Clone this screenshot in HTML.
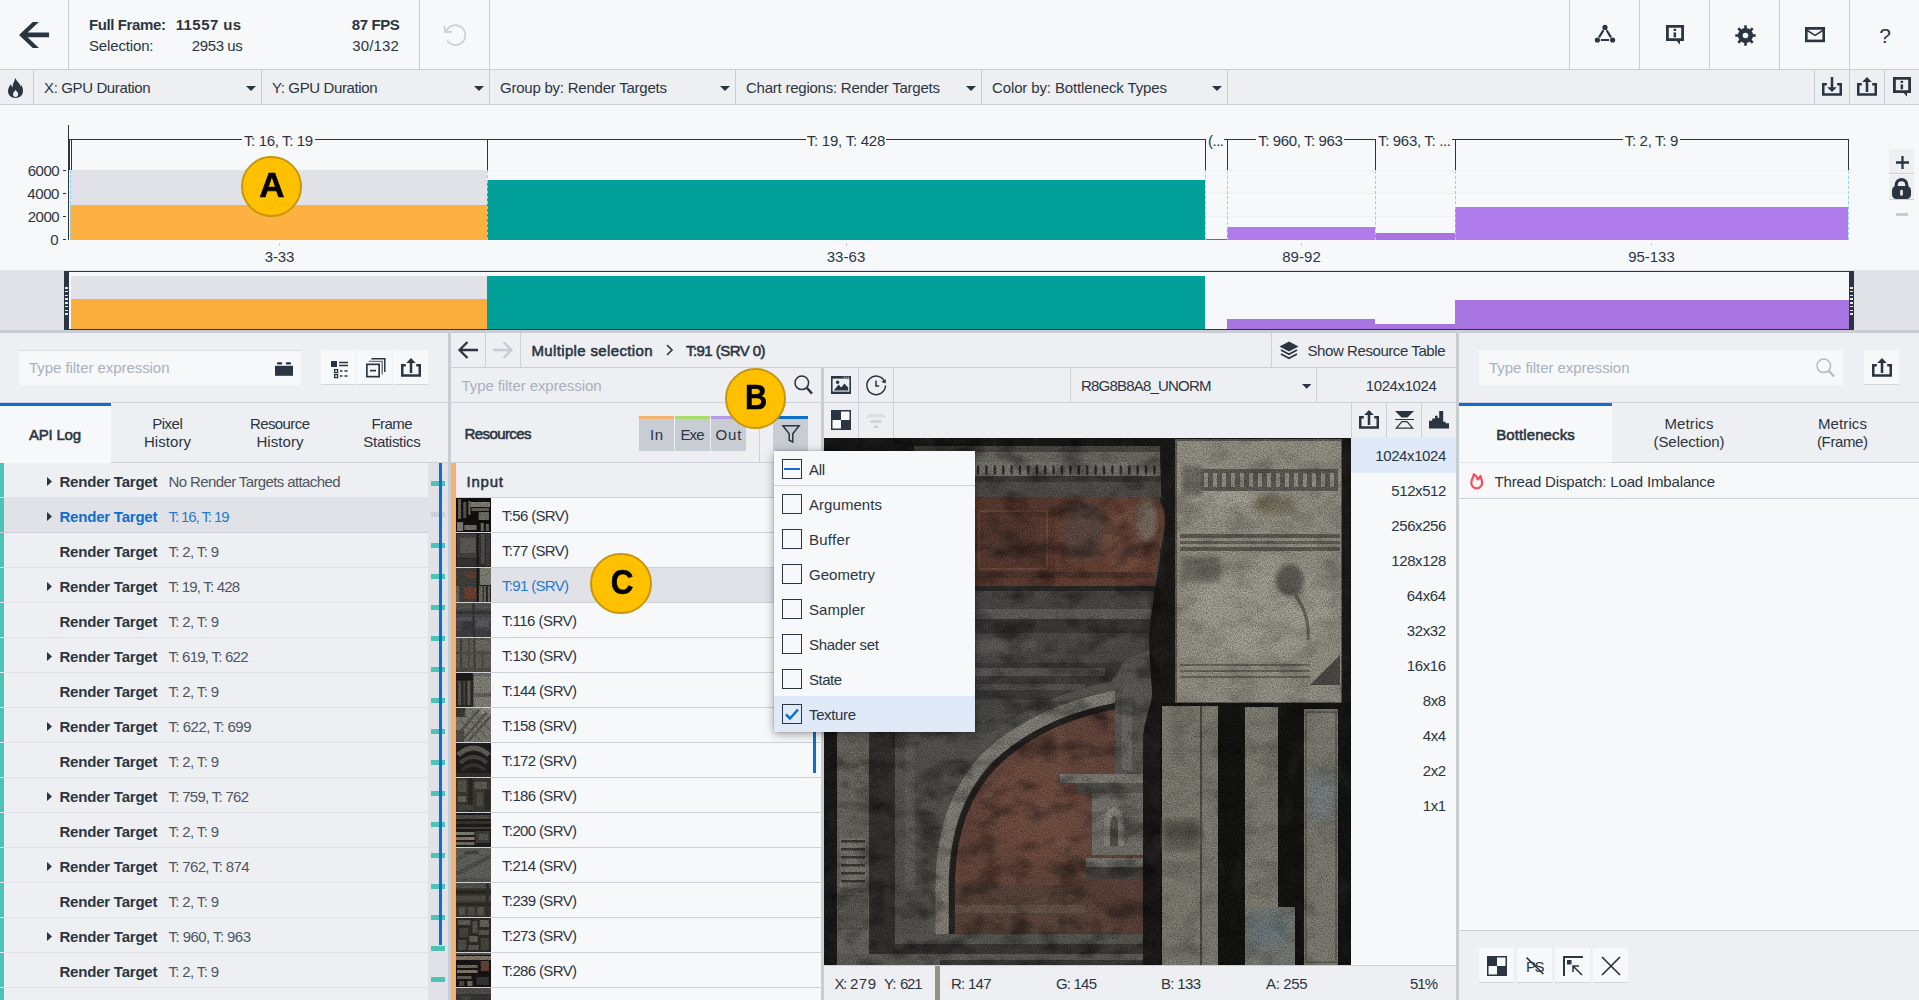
<!DOCTYPE html>
<html lang="en"><head><meta charset="utf-8"><title>Graphics Frame Analyzer</title>
<style>
*{box-sizing:border-box;margin:0;padding:0}
html,body{width:1919px;height:1000px;overflow:hidden;background:#f7f8fa}
body{position:relative;font-family:"Liberation Sans",sans-serif;font-size:15px;color:#2b3541}
.a{position:absolute;display:block}
.t{position:absolute;display:block;white-space:pre;line-height:20px;height:20px}
svg{overflow:visible}
</style></head>
<body>
<!-- top bar -->
<div class="a" style="left:0px;top:0px;width:1919px;height:69px;background:#f7f8fa;"></div>
<div class="a" style="left:0px;top:69px;width:1919px;height:1px;background:#cacdd4;"></div>
<div class="a" style="left:68px;top:0px;width:1px;height:69px;background:#cacdd4;"></div>
<div class="a" style="left:419px;top:0px;width:1px;height:69px;background:#cacdd4;"></div>
<div class="a" style="left:489px;top:0px;width:1px;height:69px;background:#cacdd4;"></div>
<div class="a" style="left:1569px;top:0px;width:1px;height:69px;background:#cacdd4;"></div>
<div class="a" style="left:1639px;top:0px;width:1px;height:69px;background:#cacdd4;"></div>
<div class="a" style="left:1709px;top:0px;width:1px;height:69px;background:#cacdd4;"></div>
<div class="a" style="left:1779px;top:0px;width:1px;height:69px;background:#cacdd4;"></div>
<div class="a" style="left:1849px;top:0px;width:1px;height:69px;background:#cacdd4;"></div>
<svg class="a" style="left:19px;top:22px;" width="30" height="26" viewBox="0 0 30 26"><path d="M0 12.9 L13.75 0 H20 L8.6 10.6 H30 V15.3 H8.6 L20 25.9 H13.75 Z" fill="#2b3541"/></svg>
<span class="t" style="top:15px;font-size:15px;font-weight:700;letter-spacing:-0.396px;left:89px;">Full Frame:</span>
<span class="t" style="top:15px;font-size:15px;font-weight:700;letter-spacing:0.420px;right:1677px;margin-right:0.420px;">11557 us</span>
<span class="t" style="top:15px;font-size:15px;font-weight:700;letter-spacing:-0.406px;right:1520px;margin-right:-0.406px;">87 FPS</span>
<span class="t" style="top:35.6px;font-size:15px;letter-spacing:-0.153px;left:89px;">Selection:</span>
<span class="t" style="top:35.6px;font-size:15px;letter-spacing:-0.398px;right:1677px;margin-right:-0.398px;">2953 us</span>
<span class="t" style="top:35.6px;font-size:15px;letter-spacing:0.122px;right:1520px;margin-right:0.122px;">30/132</span>
<svg class="a" style="left:443px;top:23.2px;" width="23" height="22" viewBox="0 0 23 22"><path d="M3.3 8.4 A9.9 9.9 0 1 1 4.2 17.6" fill="none" stroke="#cbced4" stroke-width="1.7"/><path d="M1.2 2.6 L2.4 9.4 L9.2 8.6" fill="none" stroke="#cbced4" stroke-width="1.7"/></svg>
<svg class="a" style="left:1594px;top:24px;" width="22" height="20" viewBox="0 0 22 20"><g fill="none" stroke="#2b3541" stroke-width="2.2"><path d="M9.4 6.2 L5 13.4 M12.6 6.2 L17 13.4 M6.9 16 H15.1"/></g><g fill="#2b3541"><circle cx="11" cy="3.4" r="2.6"/><circle cx="3.4" cy="16" r="2.6"/><circle cx="18.6" cy="16" r="2.6"/></g></svg>
<svg class="a" style="left:1666px;top:25px;" width="18" height="20" viewBox="0 0 18 20"><path d="M1.4 1.4 H16.6 V14.6 H1.4 Z" fill="none" stroke="#2b3541" stroke-width="2.8"/><path d="M10.4 15.5 H14 V19.8 Z" fill="#2b3541"/><rect x="7.6" y="3.8" width="2.5" height="2.2" fill="#2b3541"/><rect x="7.6" y="7.4" width="2.5" height="4.9" fill="#2b3541"/></svg>
<svg class="a" style="left:1734.5px;top:24.5px;" width="21" height="21" viewBox="0 0 21 21"><g transform="translate(10.5,10.5)" fill="#2b3541"><rect x="-1.3" y="-10.2" width="2.6" height="5" transform="rotate(0)"/><rect x="-1.3" y="-10.2" width="2.6" height="5" transform="rotate(45)"/><rect x="-1.3" y="-10.2" width="2.6" height="5" transform="rotate(90)"/><rect x="-1.3" y="-10.2" width="2.6" height="5" transform="rotate(135)"/><rect x="-1.3" y="-10.2" width="2.6" height="5" transform="rotate(180)"/><rect x="-1.3" y="-10.2" width="2.6" height="5" transform="rotate(225)"/><rect x="-1.3" y="-10.2" width="2.6" height="5" transform="rotate(270)"/><rect x="-1.3" y="-10.2" width="2.6" height="5" transform="rotate(315)"/><circle r="7.6"/><circle r="2.8" fill="#f7f8fa"/></g></svg>
<svg class="a" style="left:1805px;top:27px;" width="20" height="15.4" viewBox="0 0 20 15.4"><rect x="1.3" y="1.3" width="17.4" height="12.6" fill="none" stroke="#2b3541" stroke-width="2.6"/><path d="M1.5 3 L10 8.4 L18.5 3" fill="none" stroke="#2b3541" stroke-width="1.5"/><rect x="0" y="0" width="20" height="2.4" fill="#2b3541"/></svg>
<span class="t" style="top:25.5px;font-size:21px;left:1685px;width:400px;text-align:center;">?</span>
<!-- toolbar -->
<div class="a" style="left:0px;top:70px;width:1919px;height:34px;background:#eeeff3;"></div>
<div class="a" style="left:0px;top:104px;width:1919px;height:1px;background:#cacdd4;"></div>
<div class="a" style="left:33px;top:70px;width:1px;height:34px;background:#cacdd4;"></div>
<div class="a" style="left:261px;top:70px;width:1px;height:34px;background:#cacdd4;"></div>
<div class="a" style="left:489px;top:70px;width:1px;height:34px;background:#cacdd4;"></div>
<div class="a" style="left:735px;top:70px;width:1px;height:34px;background:#cacdd4;"></div>
<div class="a" style="left:981px;top:70px;width:1px;height:34px;background:#cacdd4;"></div>
<div class="a" style="left:1227px;top:70px;width:1px;height:34px;background:#cacdd4;"></div>
<div class="a" style="left:1814px;top:70px;width:1px;height:34px;background:#cacdd4;"></div>
<div class="a" style="left:1849px;top:70px;width:1px;height:34px;background:#cacdd4;"></div>
<div class="a" style="left:1884px;top:70px;width:1px;height:34px;background:#cacdd4;"></div>
<svg class="a" style="left:8px;top:78px;" width="15" height="20" viewBox="0 0 15 20"><path d="M7.2 0 C8.5 3 12 5.5 13 9 C13.2 8 13 7 12.6 6.2 C14.6 8.5 15 11 15 13 C15 17 12 20 7.5 20 C3 20 0 17 0 13 C0 10 1.6 8 3 6 C3.2 7.5 3.6 8.6 4.4 9.4 C4.6 6 6.4 3.5 7.2 0 Z M7.5 19 C9 19 10.2 17.8 10.2 16.2 C10.2 14.6 8.6 13.6 7.6 12 C6.6 13.6 5 14.6 5 16.2 C5 17.8 6 19 7.5 19 Z" fill="#2b3541" fill-rule="evenodd"/></svg>
<span class="t" style="top:77.5px;font-size:15px;letter-spacing:-0.373px;left:44px;">X: GPU Duration</span>
<span class="t" style="top:77.5px;font-size:15px;letter-spacing:-0.385px;left:272px;">Y: GPU Duration</span>
<span class="t" style="top:77.5px;font-size:15px;letter-spacing:-0.232px;left:500px;">Group by: Render Targets</span>
<span class="t" style="top:77.5px;font-size:15px;letter-spacing:-0.238px;left:746px;">Chart regions: Render Targets</span>
<span class="t" style="top:77.5px;font-size:15px;letter-spacing:-0.126px;left:992px;">Color by: Bottleneck Types</span>
<svg class="a" style="left:246px;top:86px;" width="10" height="5" viewBox="0 0 10 5"><path d="M0 0 H10 L5 5 Z" fill="#2b3541"/></svg>
<svg class="a" style="left:474px;top:86px;" width="10" height="5" viewBox="0 0 10 5"><path d="M0 0 H10 L5 5 Z" fill="#2b3541"/></svg>
<svg class="a" style="left:720px;top:86px;" width="10" height="5" viewBox="0 0 10 5"><path d="M0 0 H10 L5 5 Z" fill="#2b3541"/></svg>
<svg class="a" style="left:966px;top:86px;" width="10" height="5" viewBox="0 0 10 5"><path d="M0 0 H10 L5 5 Z" fill="#2b3541"/></svg>
<svg class="a" style="left:1212px;top:86px;" width="10" height="5" viewBox="0 0 10 5"><path d="M0 0 H10 L5 5 Z" fill="#2b3541"/></svg>
<svg class="a" style="left:1822px;top:77px;" width="20" height="19" viewBox="0 0 20 19"><path d="M4.8 7.25 H1.25 V17.5 H18.75 V7.25 H15.2" fill="none" stroke="#2b3541" stroke-width="2.5"/><rect x="8.75" y="0" width="2.5" height="11" fill="#2b3541"/><path d="M10 15 L5.2 10.2 H14.8 Z" fill="#2b3541"/></svg>
<svg class="a" style="left:1857px;top:77px;" width="20" height="19" viewBox="0 0 20 19"><path d="M4.8 7.25 H1.25 V17.5 H18.75 V7.25 H15.2" fill="none" stroke="#2b3541" stroke-width="2.5"/><rect x="8.75" y="4" width="2.5" height="11" fill="#2b3541"/><path d="M10 0 L5.2 4.9 H14.8 Z" fill="#2b3541"/></svg>
<svg class="a" style="left:1893px;top:77px;" width="18" height="20" viewBox="0 0 18 20"><path d="M1.4 1.4 H16.6 V14.6 H1.4 Z" fill="none" stroke="#2b3541" stroke-width="2.8"/><path d="M10.4 15.5 H14 V19.8 Z" fill="#2b3541"/><rect x="7.6" y="3.8" width="2.5" height="2.2" fill="#2b3541"/><rect x="7.6" y="7.4" width="2.5" height="4.9" fill="#2b3541"/></svg>
<!-- chart -->
<div class="a" style="left:70px;top:170px;width:1779px;height:1px;background:#eff0f3;"></div>
<div class="a" style="left:70px;top:193px;width:1779px;height:1px;background:#eff0f3;"></div>
<div class="a" style="left:70px;top:216px;width:1779px;height:1px;background:#eff0f3;"></div>
<div class="a" style="left:70px;top:170px;width:417px;height:35px;background:#e1e2e7;"></div>
<div class="a" style="left:70px;top:205px;width:417px;height:35px;background:#fcb142;"></div>
<div class="a" style="left:487px;top:180px;width:718px;height:60px;background:#009f98;"></div>
<div class="a" style="left:1205px;top:239px;width:22px;height:1px;background:#009f98;"></div>
<div class="a" style="left:1227px;top:227px;width:148px;height:13px;background:#b07cec;"></div>
<div class="a" style="left:1375px;top:233px;width:80px;height:7px;background:#a873e0;"></div>
<div class="a" style="left:1455px;top:207px;width:393px;height:33px;background:#b07cec;"></div>
<div class="a" style="left:70px;top:170px;width:0;height:70px;border-left:1px dashed #86d6f2"></div>
<div class="a" style="left:487px;top:170px;width:0;height:70px;border-left:1px dashed #86d6f2"></div>
<div class="a" style="left:1205px;top:170px;width:0;height:70px;border-left:1px dashed #86d6f2"></div>
<div class="a" style="left:1227px;top:140px;width:0;height:100px;border-left:1px dashed #86d6f2"></div>
<div class="a" style="left:1375px;top:140px;width:0;height:100px;border-left:1px dashed #86d6f2"></div>
<div class="a" style="left:1455px;top:140px;width:0;height:100px;border-left:1px dashed #86d6f2"></div>
<div class="a" style="left:1848px;top:140px;width:0;height:100px;border-left:1px dashed #86d6f2"></div>
<div class="a" style="left:68px;top:125px;width:1px;height:115px;background:#2b3541;"></div>
<div class="a" style="left:69px;top:139px;width:1780px;height:1px;background:#2b3541;"></div>
<div class="a" style="left:69px;top:139px;width:1px;height:31px;background:#2b3541;"></div>
<div class="a" style="left:71px;top:139px;width:1px;height:31px;background:#2b3541;"></div>
<div class="a" style="left:487px;top:139px;width:1px;height:31px;background:#2b3541;"></div>
<div class="a" style="left:1205px;top:139px;width:1px;height:31px;background:#2b3541;"></div>
<div class="a" style="left:1227px;top:139px;width:1px;height:31px;background:#2b3541;"></div>
<div class="a" style="left:1375px;top:139px;width:1px;height:31px;background:#2b3541;"></div>
<div class="a" style="left:1455px;top:139px;width:1px;height:31px;background:#2b3541;"></div>
<div class="a" style="left:1848px;top:139px;width:1px;height:31px;background:#2b3541;"></div>
<div class="a" style="left:242px;top:130px;width:73px;height:20px;background:#f7f8fa;"></div>
<span class="t" style="top:130.5px;font-size:15px;letter-spacing:-0.355px;left:78.5px;width:400px;text-align:center;margin-left:-0.178px;">T: 16, T: 19</span>
<div class="a" style="left:806px;top:130px;width:80px;height:20px;background:#f7f8fa;"></div>
<span class="t" style="top:130.5px;font-size:15px;letter-spacing:-0.246px;left:646px;width:400px;text-align:center;margin-left:-0.123px;">T: 19, T: 428</span>
<div class="a" style="left:1206px;top:130px;width:18px;height:20px;background:#f7f8fa;"></div>
<span class="t" style="top:130.5px;font-size:15px;letter-spacing:-0.500px;left:1016px;width:400px;text-align:center;margin-left:-0.250px;">(...</span>
<div class="a" style="left:1256px;top:130px;width:88px;height:20px;background:#f7f8fa;"></div>
<span class="t" style="top:130.5px;font-size:15px;letter-spacing:-0.407px;left:1100.5px;width:400px;text-align:center;margin-left:-0.204px;">T: 960, T: 963</span>
<div class="a" style="left:1376px;top:130px;width:76px;height:20px;background:#f7f8fa;"></div>
<span class="t" style="top:130.5px;font-size:15px;letter-spacing:-0.328px;left:1214.5px;width:400px;text-align:center;margin-left:-0.164px;">T: 963, T: ...</span>
<div class="a" style="left:1623px;top:130px;width:57px;height:20px;background:#f7f8fa;"></div>
<span class="t" style="top:130.5px;font-size:15px;letter-spacing:-0.325px;left:1451.5px;width:400px;text-align:center;margin-left:-0.162px;">T: 2, T: 9</span>
<span class="t" style="top:160.6px;font-size:15px;letter-spacing:-0.492px;right:1860.4px;margin-right:-0.492px;">6000</span>
<div class="a" style="left:63px;top:170px;width:3px;height:1px;background:#2b3541;"></div>
<span class="t" style="top:183.7px;font-size:15px;letter-spacing:-0.425px;right:1860.4px;margin-right:-0.425px;">4000</span>
<div class="a" style="left:63px;top:193px;width:3px;height:1px;background:#2b3541;"></div>
<span class="t" style="top:206.5px;font-size:15px;letter-spacing:-0.492px;right:1860.4px;margin-right:-0.492px;">2000</span>
<div class="a" style="left:63px;top:216px;width:3px;height:1px;background:#2b3541;"></div>
<span class="t" style="top:229.5px;font-size:15px;right:1860.4px;">0</span>
<div class="a" style="left:63px;top:239px;width:3px;height:1px;background:#2b3541;"></div>
<span class="t" style="top:247px;font-size:15px;letter-spacing:-0.177px;left:79.5px;width:400px;text-align:center;margin-left:-0.089px;">3-33</span>
<div class="a" style="left:279px;top:243px;width:1px;height:3px;background:#c9ccd2;"></div>
<span class="t" style="top:247px;font-size:15px;letter-spacing:0.031px;left:646px;width:400px;text-align:center;margin-left:0.016px;">33-63</span>
<div class="a" style="left:846px;top:243px;width:1px;height:3px;background:#c9ccd2;"></div>
<span class="t" style="top:247px;font-size:15px;letter-spacing:0.031px;left:1101.5px;width:400px;text-align:center;margin-left:0.016px;">89-92</span>
<div class="a" style="left:1301px;top:243px;width:1px;height:3px;background:#c9ccd2;"></div>
<span class="t" style="top:247px;font-size:15px;letter-spacing:-0.044px;left:1451.5px;width:400px;text-align:center;margin-left:-0.022px;">95-133</span>
<div class="a" style="left:1651px;top:243px;width:1px;height:3px;background:#c9ccd2;"></div>
<div class="a" style="left:1889px;top:149px;width:25px;height:25px;background:#eeeff3;border-bottom:1px solid #cdd0d6;"></div>
<div class="a" style="left:1889px;top:175px;width:25px;height:25px;background:#eeeff3;border-bottom:1px solid #cdd0d6;"></div>
<svg class="a" style="left:1895.5px;top:155.5px;" width="13" height="13" viewBox="0 0 13 13"><path d="M6.5 0 V13 M0 6.5 H13" stroke="#2b3541" stroke-width="2.3"/></svg>
<svg class="a" style="left:1892px;top:176.5px;" width="19" height="22" viewBox="0 0 19 22"><path d="M4.2 12 V8 A5.3 5.3 0 0 1 14.8 8 V12" fill="none" stroke="#2b3541" stroke-width="3.2"/><rect x="0" y="9" width="19" height="13" rx="4.5" fill="#2b3541"/><rect x="8.2" y="12.8" width="2.6" height="6" rx="1.3" fill="#eeeff3"/></svg>
<div class="a" style="left:1896px;top:213px;width:12px;height:2.5px;background:#c9ccd2;"></div>
<!-- overview -->
<div class="a" style="left:0px;top:270px;width:1919px;height:60px;background:#e1e2e7;"></div>
<div class="a" style="left:69px;top:272px;width:1780px;height:57px;background:#f7f8fa;"></div>
<div class="a" style="left:64px;top:271px;width:1790px;height:1px;background:#2b3541;"></div>
<div class="a" style="left:64px;top:329px;width:1790px;height:1px;background:#2b3541;"></div>
<div class="a" style="left:64px;top:271px;width:5px;height:59px;background:#2b3541;"></div>
<div class="a" style="left:1849px;top:271px;width:5px;height:59px;background:#2b3541;"></div>
<div class="a" style="left:0px;top:330px;width:1919px;height:3px;background:#c8ccd3;"></div>
<div class="a" style="left:71px;top:276px;width:416px;height:23px;background:#e1e2e7;"></div>
<div class="a" style="left:71px;top:299px;width:416px;height:30px;background:#f9ae3e;"></div>
<div class="a" style="left:487px;top:276px;width:718px;height:53px;background:#009f98;"></div>
<div class="a" style="left:1227px;top:319px;width:148px;height:10px;background:#a874e2;"></div>
<div class="a" style="left:1375px;top:324px;width:80px;height:5px;background:#a874e2;"></div>
<div class="a" style="left:1455px;top:300px;width:394px;height:29px;background:#a874e2;"></div>
<div class="a" style="left:65px;top:287.0px;width:3px;height:1.5px;background:#e4e5e9;"></div>
<div class="a" style="left:65px;top:290.75px;width:3px;height:1.5px;background:#e4e5e9;"></div>
<div class="a" style="left:65px;top:294.5px;width:3px;height:1.5px;background:#e4e5e9;"></div>
<div class="a" style="left:65px;top:298.25px;width:3px;height:1.5px;background:#e4e5e9;"></div>
<div class="a" style="left:65px;top:302.0px;width:3px;height:1.5px;background:#e4e5e9;"></div>
<div class="a" style="left:65px;top:305.75px;width:3px;height:1.5px;background:#e4e5e9;"></div>
<div class="a" style="left:65px;top:309.5px;width:3px;height:1.5px;background:#e4e5e9;"></div>
<div class="a" style="left:65px;top:313.25px;width:3px;height:1.5px;background:#e4e5e9;"></div>
<div class="a" style="left:1850px;top:287.0px;width:3px;height:1.5px;background:#e4e5e9;"></div>
<div class="a" style="left:1850px;top:290.75px;width:3px;height:1.5px;background:#e4e5e9;"></div>
<div class="a" style="left:1850px;top:294.5px;width:3px;height:1.5px;background:#e4e5e9;"></div>
<div class="a" style="left:1850px;top:298.25px;width:3px;height:1.5px;background:#e4e5e9;"></div>
<div class="a" style="left:1850px;top:302.0px;width:3px;height:1.5px;background:#e4e5e9;"></div>
<div class="a" style="left:1850px;top:305.75px;width:3px;height:1.5px;background:#e4e5e9;"></div>
<div class="a" style="left:1850px;top:309.5px;width:3px;height:1.5px;background:#e4e5e9;"></div>
<div class="a" style="left:1850px;top:313.25px;width:3px;height:1.5px;background:#e4e5e9;"></div>
<div class="a" style="left:240.8px;top:155.8px;width:61.4px;height:61.4px;border-radius:50%;background:#ffc000;border:2px solid #c7960d"></div>
<span class="t" style="top:174.9px;font-size:35.7px;font-weight:700;color:#000;left:71.69999999999999px;width:400px;text-align:center;transform:scaleX(0.98);-webkit-text-stroke:0.6px #000;">A</span>
<!-- left panel -->
<div class="a" style="left:0px;top:333px;width:448px;height:667px;background:#eeeff3;"></div>
<div class="a" style="left:19px;top:350px;width:282px;height:35px;background:#f7f8fa;border-top:1px solid #dcdee3;"></div>
<span class="t" style="top:358px;font-size:15px;color:#a9b1bd;letter-spacing:-0.059px;left:29px;">Type filter expression</span>
<svg class="a" style="left:275px;top:361.6px;" width="18" height="14" viewBox="0 0 18 14"><rect x="0" y="3.8" width="18" height="10" fill="#2b3541"/><rect x="2" y="0.2" width="5.2" height="2.4" rx="1" fill="#2b3541"/><rect x="10.8" y="0.2" width="5.2" height="2.4" rx="1" fill="#2b3541"/></svg>
<div class="a" style="left:321px;top:350px;width:35px;height:35px;background:#f7f8fa;border-bottom:1px solid #d2d5da;"></div>
<div class="a" style="left:357px;top:350px;width:35px;height:35px;background:#f7f8fa;border-bottom:1px solid #d2d5da;"></div>
<div class="a" style="left:393px;top:350px;width:35px;height:35px;background:#f7f8fa;border-bottom:1px solid #d2d5da;"></div>
<svg class="a" style="left:331.4px;top:360.6px;" width="17" height="17" viewBox="0 0 17 17"><rect x="0" y="0" width="6" height="6" fill="#2b3541"/><path d="M8 1.5 H17 M8 4.5 H17" stroke="#2b3541" stroke-width="1.3"/><g fill="none" stroke="#2b3541" stroke-width="1.3"><rect x="3.6" y="8.6" width="3" height="3"/><rect x="3.6" y="13.6" width="3" height="3"/></g><path d="M9 10 H11.5 M13.5 10 H16.5 M9 15 H11.5 M13.5 15 H16.5" stroke="#2b3541" stroke-width="1.5"/></svg>
<svg class="a" style="left:366px;top:357.5px;" width="20" height="20" viewBox="0 0 20 20"><g fill="none"><path d="M5.3 0.8 H18.8 V14" stroke="#2b3541" stroke-width="1.5"/><path d="M2.8 3.4 H16.2 V16.5" stroke="#6b737d" stroke-width="1.4"/><rect x="0.85" y="6.35" width="12.3" height="12.3" stroke="#2b3541" stroke-width="1.7"/><path d="M4 12.6 H10" stroke="#2b3541" stroke-width="1.7"/></g></svg>
<svg class="a" style="left:401px;top:358px;" width="20" height="19" viewBox="0 0 20 19"><path d="M4.8 7.25 H1.25 V17.5 H18.75 V7.25 H15.2" fill="none" stroke="#2b3541" stroke-width="2.5"/><rect x="8.75" y="4" width="2.5" height="11" fill="#2b3541"/><path d="M10 0 L5.2 4.9 H14.8 Z" fill="#2b3541"/></svg>
<div class="a" style="left:0px;top:402px;width:448px;height:1px;background:#cdd0d6;"></div>
<div class="a" style="left:0px;top:403px;width:111px;height:60px;background:#f7f8fa;"></div>
<div class="a" style="left:0px;top:403px;width:111px;height:3px;background:#0f6ecd;"></div>
<div class="a" style="left:111px;top:462px;width:337px;height:1px;background:#cdd0d6;"></div>
<span class="t" style="top:424.5px;font-size:15px;-webkit-text-stroke:0.55px currentColor;letter-spacing:-0.229px;left:29px;">API Log</span>
<span class="t" style="top:414.4px;font-size:15px;letter-spacing:-0.504px;left:-32.5px;width:400px;text-align:center;margin-left:-0.252px;">Pixel</span>
<span class="t" style="top:432.4px;font-size:15px;letter-spacing:0.055px;left:-32.5px;width:400px;text-align:center;margin-left:0.027px;">History</span>
<span class="t" style="top:414.4px;font-size:15px;letter-spacing:-0.600px;left:80px;width:400px;text-align:center;margin-left:-0.300px;">Resource</span>
<span class="t" style="top:432.4px;font-size:15px;letter-spacing:0.055px;left:80px;width:400px;text-align:center;margin-left:0.027px;">History</span>
<span class="t" style="top:414.4px;font-size:15px;letter-spacing:-0.586px;left:192px;width:400px;text-align:center;margin-left:-0.293px;">Frame</span>
<span class="t" style="top:432.4px;font-size:15px;letter-spacing:-0.280px;left:192px;width:400px;text-align:center;margin-left:-0.140px;">Statistics</span>
<div class="a" style="left:4px;top:497px;width:424px;height:1px;background:#e1e2e7;"></div>
<svg class="a" style="left:47px;top:477px;" width="5" height="9" viewBox="0 0 5 9"><path d="M0 0 L5 4.5 L0 9 Z" fill="#2b3541"/></svg>
<span class="t" style="top:471.6px;font-size:15px;font-weight:700;letter-spacing:-0.215px;left:59.5px;">Render Target</span>
<span class="t" style="top:471.6px;font-size:15px;color:#4d5661;letter-spacing:-0.614px;left:168.5px;">No Render Targets attached</span>
<div class="a" style="left:4px;top:498px;width:424px;height:35px;background:#e1e2e7;"></div>
<div class="a" style="left:4px;top:532px;width:424px;height:1px;background:#cdd0d6;"></div>
<svg class="a" style="left:47px;top:512px;" width="5" height="9" viewBox="0 0 5 9"><path d="M0 0 L5 4.5 L0 9 Z" fill="#2b3541"/></svg>
<span class="t" style="top:506.6px;font-size:15px;font-weight:700;color:#0f6ecd;letter-spacing:-0.215px;left:59.5px;">Render Target</span>
<span class="t" style="top:506.6px;font-size:15px;color:#1e7bd0;letter-spacing:-1.101px;left:168.5px;">T: 16, T: 19</span>
<div class="a" style="left:4px;top:567px;width:424px;height:1px;background:#e1e2e7;"></div>
<span class="t" style="top:541.6px;font-size:15px;font-weight:700;letter-spacing:-0.215px;left:59.5px;">Render Target</span>
<span class="t" style="top:541.6px;font-size:15px;color:#4d5661;letter-spacing:-0.658px;left:168.5px;">T: 2, T: 9</span>
<div class="a" style="left:4px;top:602px;width:424px;height:1px;background:#e1e2e7;"></div>
<svg class="a" style="left:47px;top:582px;" width="5" height="9" viewBox="0 0 5 9"><path d="M0 0 L5 4.5 L0 9 Z" fill="#2b3541"/></svg>
<span class="t" style="top:576.6px;font-size:15px;font-weight:700;letter-spacing:-0.215px;left:59.5px;">Render Target</span>
<span class="t" style="top:576.6px;font-size:15px;color:#4d5661;letter-spacing:-0.829px;left:168.5px;">T: 19, T: 428</span>
<div class="a" style="left:4px;top:637px;width:424px;height:1px;background:#e1e2e7;"></div>
<span class="t" style="top:611.6px;font-size:15px;font-weight:700;letter-spacing:-0.215px;left:59.5px;">Render Target</span>
<span class="t" style="top:611.6px;font-size:15px;color:#4d5661;letter-spacing:-0.658px;left:168.5px;">T: 2, T: 9</span>
<div class="a" style="left:4px;top:672px;width:424px;height:1px;background:#e1e2e7;"></div>
<svg class="a" style="left:47px;top:652px;" width="5" height="9" viewBox="0 0 5 9"><path d="M0 0 L5 4.5 L0 9 Z" fill="#2b3541"/></svg>
<span class="t" style="top:646.6px;font-size:15px;font-weight:700;letter-spacing:-0.215px;left:59.5px;">Render Target</span>
<span class="t" style="top:646.6px;font-size:15px;color:#4d5661;letter-spacing:-0.754px;left:168.5px;">T: 619, T: 622</span>
<div class="a" style="left:4px;top:707px;width:424px;height:1px;background:#e1e2e7;"></div>
<span class="t" style="top:681.6px;font-size:15px;font-weight:700;letter-spacing:-0.215px;left:59.5px;">Render Target</span>
<span class="t" style="top:681.6px;font-size:15px;color:#4d5661;letter-spacing:-0.658px;left:168.5px;">T: 2, T: 9</span>
<div class="a" style="left:4px;top:742px;width:424px;height:1px;background:#e1e2e7;"></div>
<svg class="a" style="left:47px;top:722px;" width="5" height="9" viewBox="0 0 5 9"><path d="M0 0 L5 4.5 L0 9 Z" fill="#2b3541"/></svg>
<span class="t" style="top:716.6px;font-size:15px;font-weight:700;letter-spacing:-0.215px;left:59.5px;">Render Target</span>
<span class="t" style="top:716.6px;font-size:15px;color:#4d5661;letter-spacing:-0.523px;left:168.5px;">T: 622, T: 699</span>
<div class="a" style="left:4px;top:777px;width:424px;height:1px;background:#e1e2e7;"></div>
<span class="t" style="top:751.6px;font-size:15px;font-weight:700;letter-spacing:-0.215px;left:59.5px;">Render Target</span>
<span class="t" style="top:751.6px;font-size:15px;color:#4d5661;letter-spacing:-0.658px;left:168.5px;">T: 2, T: 9</span>
<div class="a" style="left:4px;top:812px;width:424px;height:1px;background:#e1e2e7;"></div>
<svg class="a" style="left:47px;top:792px;" width="5" height="9" viewBox="0 0 5 9"><path d="M0 0 L5 4.5 L0 9 Z" fill="#2b3541"/></svg>
<span class="t" style="top:786.6px;font-size:15px;font-weight:700;letter-spacing:-0.215px;left:59.5px;">Render Target</span>
<span class="t" style="top:786.6px;font-size:15px;color:#4d5661;letter-spacing:-0.715px;left:168.5px;">T: 759, T: 762</span>
<div class="a" style="left:4px;top:847px;width:424px;height:1px;background:#e1e2e7;"></div>
<span class="t" style="top:821.6px;font-size:15px;font-weight:700;letter-spacing:-0.215px;left:59.5px;">Render Target</span>
<span class="t" style="top:821.6px;font-size:15px;color:#4d5661;letter-spacing:-0.658px;left:168.5px;">T: 2, T: 9</span>
<div class="a" style="left:4px;top:882px;width:424px;height:1px;background:#e1e2e7;"></div>
<svg class="a" style="left:47px;top:862px;" width="5" height="9" viewBox="0 0 5 9"><path d="M0 0 L5 4.5 L0 9 Z" fill="#2b3541"/></svg>
<span class="t" style="top:856.6px;font-size:15px;font-weight:700;letter-spacing:-0.215px;left:59.5px;">Render Target</span>
<span class="t" style="top:856.6px;font-size:15px;color:#4d5661;letter-spacing:-0.677px;left:168.5px;">T: 762, T: 874</span>
<div class="a" style="left:4px;top:917px;width:424px;height:1px;background:#e1e2e7;"></div>
<span class="t" style="top:891.6px;font-size:15px;font-weight:700;letter-spacing:-0.215px;left:59.5px;">Render Target</span>
<span class="t" style="top:891.6px;font-size:15px;color:#4d5661;letter-spacing:-0.658px;left:168.5px;">T: 2, T: 9</span>
<div class="a" style="left:4px;top:952px;width:424px;height:1px;background:#e1e2e7;"></div>
<svg class="a" style="left:47px;top:932px;" width="5" height="9" viewBox="0 0 5 9"><path d="M0 0 L5 4.5 L0 9 Z" fill="#2b3541"/></svg>
<span class="t" style="top:926.6px;font-size:15px;font-weight:700;letter-spacing:-0.215px;left:59.5px;">Render Target</span>
<span class="t" style="top:926.6px;font-size:15px;color:#4d5661;letter-spacing:-0.561px;left:168.5px;">T: 960, T: 963</span>
<div class="a" style="left:4px;top:987px;width:424px;height:1px;background:#e1e2e7;"></div>
<span class="t" style="top:961.6px;font-size:15px;font-weight:700;letter-spacing:-0.215px;left:59.5px;">Render Target</span>
<span class="t" style="top:961.6px;font-size:15px;color:#4d5661;letter-spacing:-0.658px;left:168.5px;">T: 2, T: 9</span>
<div class="a" style="left:0px;top:463px;width:4px;height:537px;background:#4bc4b5;"></div>
<div class="a" style="left:0px;top:497px;width:4px;height:1px;background:#e4e5ea;"></div>
<div class="a" style="left:0px;top:532px;width:4px;height:1px;background:#cdd0d6;"></div>
<div class="a" style="left:0px;top:567px;width:4px;height:1px;background:#e4e5ea;"></div>
<div class="a" style="left:0px;top:602px;width:4px;height:1px;background:#e4e5ea;"></div>
<div class="a" style="left:0px;top:637px;width:4px;height:1px;background:#e4e5ea;"></div>
<div class="a" style="left:0px;top:672px;width:4px;height:1px;background:#e4e5ea;"></div>
<div class="a" style="left:0px;top:707px;width:4px;height:1px;background:#e4e5ea;"></div>
<div class="a" style="left:0px;top:742px;width:4px;height:1px;background:#e4e5ea;"></div>
<div class="a" style="left:0px;top:777px;width:4px;height:1px;background:#e4e5ea;"></div>
<div class="a" style="left:0px;top:812px;width:4px;height:1px;background:#e4e5ea;"></div>
<div class="a" style="left:0px;top:847px;width:4px;height:1px;background:#e4e5ea;"></div>
<div class="a" style="left:0px;top:882px;width:4px;height:1px;background:#e4e5ea;"></div>
<div class="a" style="left:0px;top:917px;width:4px;height:1px;background:#e4e5ea;"></div>
<div class="a" style="left:0px;top:952px;width:4px;height:1px;background:#e4e5ea;"></div>
<div class="a" style="left:0px;top:987px;width:4px;height:1px;background:#e4e5ea;"></div>
<div class="a" style="left:428px;top:463px;width:20px;height:537px;background:#e1e2e7;"></div>
<div class="a" style="left:431px;top:481px;width:14px;height:5px;background:#4bc4b5;"></div>
<div class="a" style="left:431px;top:512px;width:14px;height:5px;background:#cdd0d6;"></div>
<div class="a" style="left:431px;top:543px;width:14px;height:5px;background:#4bc4b5;"></div>
<div class="a" style="left:431px;top:574px;width:14px;height:5px;background:#4bc4b5;"></div>
<div class="a" style="left:431px;top:605px;width:14px;height:5px;background:#4bc4b5;"></div>
<div class="a" style="left:431px;top:636px;width:14px;height:5px;background:#4bc4b5;"></div>
<div class="a" style="left:431px;top:667px;width:14px;height:5px;background:#4bc4b5;"></div>
<div class="a" style="left:431px;top:698px;width:14px;height:5px;background:#4bc4b5;"></div>
<div class="a" style="left:431px;top:729px;width:14px;height:5px;background:#4bc4b5;"></div>
<div class="a" style="left:431px;top:760px;width:14px;height:5px;background:#4bc4b5;"></div>
<div class="a" style="left:431px;top:791px;width:14px;height:5px;background:#4bc4b5;"></div>
<div class="a" style="left:431px;top:822px;width:14px;height:5px;background:#4bc4b5;"></div>
<div class="a" style="left:431px;top:853px;width:14px;height:5px;background:#4bc4b5;"></div>
<div class="a" style="left:431px;top:884px;width:14px;height:5px;background:#4bc4b5;"></div>
<div class="a" style="left:431px;top:915px;width:14px;height:5px;background:#4bc4b5;"></div>
<div class="a" style="left:431px;top:946px;width:14px;height:5px;background:#4bc4b5;"></div>
<div class="a" style="left:431px;top:977px;width:14px;height:5px;background:#4bc4b5;"></div>
<div class="a" style="left:439px;top:463px;width:3px;height:482px;background:#0f6ecd;"></div>
<div class="a" style="left:448px;top:333px;width:3px;height:667px;background:#c8ccd3;"></div>
<!-- mid panel -->
<div class="a" style="left:451px;top:333px;width:370px;height:667px;background:#eeeff3;"></div>
<div class="a" style="left:451px;top:333px;width:1005px;height:34px;background:#eeeff3;"></div>
<div class="a" style="left:451px;top:367px;width:1005px;height:1px;background:#cdd0d6;"></div>
<div class="a" style="left:485px;top:333px;width:1px;height:34px;background:#cdd0d6;"></div>
<div class="a" style="left:520px;top:333px;width:1px;height:34px;background:#cdd0d6;"></div>
<svg class="a" style="left:458px;top:341px;" width="20" height="18" viewBox="0 0 20 18"><path d="M9.5 1 L1.5 9 L9.5 17 M2 9 H20" fill="none" stroke="#2b3541" stroke-width="2.3"/></svg>
<svg class="a" style="left:493px;top:341px;" width="20" height="18" viewBox="0 0 20 18"><g transform="translate(20,0) scale(-1,1)"><path d="M9.5 1 L1.5 9 L9.5 17 M2 9 H20" fill="none" stroke="#c9ccd2" stroke-width="2.3"/></g></svg>
<span class="t" style="top:340.5px;font-size:15px;-webkit-text-stroke:0.55px currentColor;letter-spacing:0.349px;left:531.5px;">Multiple selection</span>
<svg class="a" style="left:666px;top:344px;" width="7" height="12" viewBox="0 0 7 12"><path d="M1 1 L6 6 L1 11" fill="none" stroke="#2b3541" stroke-width="1.6"/></svg>
<span class="t" style="top:340.5px;font-size:15px;-webkit-text-stroke:0.55px currentColor;letter-spacing:-0.554px;left:686px;">T:91 (SRV 0)</span>
<div class="a" style="left:451px;top:402px;width:370px;height:1px;background:#cdd0d6;"></div>
<span class="t" style="top:375.5px;font-size:15px;color:#a9b1bd;letter-spacing:-0.083px;left:461.5px;">Type filter expression</span>
<svg class="a" style="left:794px;top:375px;" width="19" height="20" viewBox="0 0 19 20"><circle cx="7.8" cy="7.8" r="6.8" fill="none" stroke="#2b3541" stroke-width="1.5"/><path d="M12.8 12.8 L18 18.6" stroke="#2b3541" stroke-width="2.4"/></svg>
<div class="a" style="left:451px;top:462px;width:370px;height:1px;background:#cdd0d6;"></div>
<span class="t" style="top:424px;font-size:15px;-webkit-text-stroke:0.55px currentColor;letter-spacing:-0.588px;left:464.5px;">Resources</span>
<div class="a" style="left:639px;top:416px;width:35px;height:35px;background:#c8ccd3;"></div>
<div class="a" style="left:639px;top:416px;width:35px;height:3px;background:#f4b26e;"></div>
<span class="t" style="top:425px;font-size:15px;letter-spacing:0.484px;left:456.5px;width:400px;text-align:center;margin-left:0.242px;">In</span>
<div class="a" style="left:675px;top:416px;width:35px;height:35px;background:#c8ccd3;"></div>
<div class="a" style="left:675px;top:416px;width:35px;height:3px;background:#a8dc6c;"></div>
<span class="t" style="top:425px;font-size:15px;letter-spacing:-0.930px;left:492.5px;width:400px;text-align:center;margin-left:-0.465px;">Exe</span>
<div class="a" style="left:711px;top:416px;width:35px;height:35px;background:#c8ccd3;"></div>
<div class="a" style="left:711px;top:416px;width:35px;height:3px;background:#b79ae6;"></div>
<span class="t" style="top:425px;font-size:15px;letter-spacing:0.906px;left:528.5px;width:400px;text-align:center;margin-left:0.453px;">Out</span>
<div class="a" style="left:759px;top:403px;width:1px;height:59px;background:#cdd0d6;"></div>
<div class="a" style="left:773px;top:416px;width:35px;height:35px;background:#c8ccd3;"></div>
<div class="a" style="left:773px;top:416px;width:35px;height:3px;background:#0f6ecd;"></div>
<svg class="a" style="left:782px;top:424.8px;" width="18" height="18" viewBox="0 0 18 18"><path d="M0.9 0.8 H17.1 L10.8 8.8 V17 L7.2 15.2 V8.8 Z" fill="none" stroke="#2b3541" stroke-width="1.5" stroke-linejoin="miter"/></svg>
<svg class="a" width="0" height="0" style="left:0;top:0"><defs><filter id="tg" x="0" y="0" width="100%" height="100%"><feTurbulence type="fractalNoise" baseFrequency="0.9" numOctaves="2" seed="3"/><feColorMatrix type="matrix" values="0 0 0 0 0  0 0 0 0 0  0 0 0 0 0  1.6 0 0 0 -0.5"/></filter></defs></svg>
<div class="a" style="left:456px;top:463px;width:365px;height:537px;background:#f7f8fa;"></div>
<div class="a" style="left:451px;top:463px;width:5px;height:537px;background:#f4b26e;"></div>
<div class="a" style="left:456px;top:463px;width:365px;height:35px;background:#eeeff3;"></div>
<span class="t" style="top:471.5px;font-size:15px;-webkit-text-stroke:0.55px currentColor;letter-spacing:0.781px;left:466.5px;">Input</span>
<div class="a" style="left:456px;top:497px;width:365px;height:1px;background:#cdd0d6;"></div>
<svg class="a" style="left:456px;top:498px;overflow:hidden" width="35" height="34" viewBox="0 0 34 34" preserveAspectRatio="none"><rect width="34" height="34" fill="#131211"/><rect x="2" y="1" width="3" height="20" fill="#6f6c62"/><rect x="7" y="4" width="3" height="16" fill="#5d5b53"/><rect x="12" y="3" width="2" height="14" fill="#77746a"/><rect x="14" y="4" width="19" height="5" fill="#8c897e"/><rect x="15" y="10" width="17" height="3" fill="#6b685f"/><rect x="22" y="14" width="10" height="8" fill="#7a776c"/><rect x="1" y="24" width="6" height="9" fill="#8a877c"/><rect x="8" y="27" width="12" height="5" fill="#7d7a70"/><rect x="24" y="25" width="3" height="8" fill="#77746a"/><rect x="29" y="26" width="3" height="7" fill="#6b685f"/><rect width="34" height="34" filter="url(#tg)" opacity=".45"/></svg>
<span class="t" style="top:506px;font-size:15px;letter-spacing:-0.677px;left:502px;">T:56 (SRV)</span>
<div class="a" style="left:456px;top:532px;width:365px;height:1px;background:#cdd0d6;"></div>
<svg class="a" style="left:456px;top:533px;overflow:hidden" width="35" height="34" viewBox="0 0 34 34" preserveAspectRatio="none"><rect width="34" height="34" fill="#2e2c2a"/><rect x="1" y="1" width="22" height="24" fill="#4a4844"/><rect x="4" y="5" width="15" height="15" fill="#63615c"/><rect x="24" y="1" width="4" height="30" fill="#55534e"/><rect x="29" y="1" width="4" height="32" fill="#45433f"/><rect x="1" y="26" width="22" height="7" fill="#3b3936"/><rect x="20" y="0" width="2" height="34" fill="#1b1a19"/><rect width="34" height="34" filter="url(#tg)" opacity=".45"/></svg>
<span class="t" style="top:541px;font-size:15px;letter-spacing:-0.677px;left:502px;">T:77 (SRV)</span>
<div class="a" style="left:456px;top:568px;width:365px;height:35px;background:#e1e2e7;"></div>
<div class="a" style="left:456px;top:567px;width:365px;height:1px;background:#cdd0d6;"></div>
<svg class="a" style="left:456px;top:568px;overflow:hidden" width="35" height="34" viewBox="0 0 34 34" preserveAspectRatio="none"><rect width="34" height="34" fill="#2a2927"/><rect x="0" y="0" width="21" height="34" fill="#464541"/><rect x="9" y="4" width="12" height="6" fill="#6a4336"/><rect x="8" y="19" width="12" height="12" fill="#754636"/><rect x="0" y="18" width="3" height="16" fill="#6a6963"/><rect x="23" y="0" width="11" height="17" fill="#8a887d"/><rect x="22" y="18" width="4" height="16" fill="#706e65"/><rect x="27" y="18" width="2" height="16" fill="#74726a"/><rect x="31" y="18" width="2" height="16" fill="#706e65"/><rect x="20" y="0" width="2" height="34" fill="#1a1918"/><rect width="34" height="34" filter="url(#tg)" opacity=".45"/></svg>
<span class="t" style="top:576px;font-size:15px;color:#1e7bd0;letter-spacing:-0.677px;left:502px;">T:91 (SRV)</span>
<div class="a" style="left:456px;top:602px;width:365px;height:1px;background:#cdd0d6;"></div>
<svg class="a" style="left:456px;top:603px;overflow:hidden" width="35" height="34" viewBox="0 0 34 34" preserveAspectRatio="none"><rect width="34" height="34" fill="#4e4e52"/><rect x="0" y="0" width="34" height="6" fill="#5d5a55"/><rect x="0" y="8" width="34" height="3" fill="#3b3b40"/><rect x="0" y="14" width="34" height="4" fill="#5a5a60"/><rect x="6" y="18" width="10" height="9" fill="#3e3e44"/><rect x="20" y="17" width="12" height="7" fill="#626268"/><rect x="0" y="27" width="34" height="7" fill="#44444a"/><rect x="16" y="0" width="2" height="34" fill="#36363a"/><rect width="34" height="34" filter="url(#tg)" opacity=".45"/></svg>
<span class="t" style="top:611px;font-size:15px;letter-spacing:-0.531px;left:502px;">T:116 (SRV)</span>
<div class="a" style="left:456px;top:637px;width:365px;height:1px;background:#cdd0d6;"></div>
<svg class="a" style="left:456px;top:638px;overflow:hidden" width="35" height="34" viewBox="0 0 34 34" preserveAspectRatio="none"><rect width="34" height="34" fill="#66655d"/><rect x="4" y="0" width="2" height="34" fill="#4a4943"/><rect x="12" y="0" width="1.5" height="34" fill="#504f49"/><rect x="17" y="0" width="2" height="34" fill="#45443f"/><rect x="25" y="0" width="1.5" height="34" fill="#504f49"/><rect x="0" y="14" width="34" height="2" fill="#55544e"/><rect x="19" y="2" width="14" height="10" fill="#737269"/><rect x="0" y="30" width="34" height="4" fill="#55544d"/><rect width="34" height="34" filter="url(#tg)" opacity=".45"/></svg>
<span class="t" style="top:646px;font-size:15px;letter-spacing:-0.644px;left:502px;">T:130 (SRV)</span>
<div class="a" style="left:456px;top:672px;width:365px;height:1px;background:#cdd0d6;"></div>
<svg class="a" style="left:456px;top:673px;overflow:hidden" width="35" height="34" viewBox="0 0 34 34" preserveAspectRatio="none"><rect width="34" height="34" fill="#2d2c29"/><rect x="0" y="0" width="16" height="7" fill="#1f1e1c"/><rect x="2" y="8" width="3" height="24" fill="#5e5c55"/><rect x="7" y="8" width="2" height="24" fill="#4e4c46"/><rect x="11" y="8" width="3" height="24" fill="#66645c"/><rect x="17" y="0" width="17" height="34" fill="#8b8a81"/><rect x="17" y="20" width="17" height="4" fill="#6a6961"/><rect x="17" y="0" width="17" height="3" fill="#75746c"/><rect width="34" height="34" filter="url(#tg)" opacity=".45"/></svg>
<span class="t" style="top:681px;font-size:15px;letter-spacing:-0.644px;left:502px;">T:144 (SRV)</span>
<div class="a" style="left:456px;top:707px;width:365px;height:1px;background:#cdd0d6;"></div>
<svg class="a" style="left:456px;top:708px;overflow:hidden" width="35" height="34" viewBox="0 0 34 34" preserveAspectRatio="none"><rect width="34" height="34" fill="#84847a"/><rect x="0" y="0" width="9" height="9" fill="#3e3e38"/><rect x="0" y="22" width="8" height="12" fill="#55554d"/><rect x="24" y="0" width="10" height="6" fill="#9a9a90"/><path d="M8 30 L30 4 M12 33 L33 9 M4 24 L22 2" stroke="#5a5a52" stroke-width="2.2" fill="none"/><path d="M8 6 L30 30 M4 12 L24 33 M16 4 L33 22" stroke="#6a6a61" stroke-width="1.6" fill="none"/><rect width="34" height="34" filter="url(#tg)" opacity=".45"/></svg>
<span class="t" style="top:716px;font-size:15px;letter-spacing:-0.644px;left:502px;">T:158 (SRV)</span>
<div class="a" style="left:456px;top:742px;width:365px;height:1px;background:#cdd0d6;"></div>
<svg class="a" style="left:456px;top:743px;overflow:hidden" width="35" height="34" viewBox="0 0 34 34" preserveAspectRatio="none"><rect width="34" height="34" fill="#242220"/><path d="M2 12 Q17 -2 32 12" stroke="#6a6761" stroke-width="5" fill="none"/><path d="M4 20 Q17 8 30 20" stroke="#4e4b46" stroke-width="4" fill="none"/><path d="M6 27 Q17 17 28 27" stroke="#3d3a36" stroke-width="3.5" fill="none"/><rect x="0" y="30" width="34" height="4" fill="#35322f"/><rect width="34" height="34" filter="url(#tg)" opacity=".45"/></svg>
<span class="t" style="top:751px;font-size:15px;letter-spacing:-0.644px;left:502px;">T:172 (SRV)</span>
<div class="a" style="left:456px;top:777px;width:365px;height:1px;background:#cdd0d6;"></div>
<svg class="a" style="left:456px;top:778px;overflow:hidden" width="35" height="34" viewBox="0 0 34 34" preserveAspectRatio="none"><rect width="34" height="34" fill="#3f3e37"/><rect x="2" y="2" width="8" height="12" fill="#5c5b51"/><rect x="12" y="0" width="4" height="34" fill="#2b2a25"/><rect x="18" y="4" width="12" height="7" fill="#66655a"/><rect x="20" y="14" width="6" height="14" fill="#55544a"/><rect x="2" y="18" width="8" height="6" fill="#6b6a5e"/><rect x="28" y="12" width="5" height="20" fill="#2f2e29"/><rect x="3" y="27" width="14" height="5" fill="#4d4c43"/><rect width="34" height="34" filter="url(#tg)" opacity=".45"/></svg>
<span class="t" style="top:786px;font-size:15px;letter-spacing:-0.644px;left:502px;">T:186 (SRV)</span>
<div class="a" style="left:456px;top:812px;width:365px;height:1px;background:#cdd0d6;"></div>
<svg class="a" style="left:456px;top:813px;overflow:hidden" width="35" height="34" viewBox="0 0 34 34" preserveAspectRatio="none"><rect width="34" height="34" fill="#22201e"/><rect x="0" y="2" width="34" height="4" fill="#55524c"/><rect x="0" y="8" width="34" height="3" fill="#3a3733"/><rect x="0" y="14" width="34" height="2" fill="#4a4742"/><rect x="0" y="19" width="18" height="3" fill="#8c887c"/><rect x="0" y="24" width="18" height="3" fill="#9a8676"/><rect x="0" y="29" width="18" height="3" fill="#7c786d"/><rect x="19" y="18" width="14" height="12" fill="#45423d"/><rect x="22" y="21" width="9" height="6" fill="#5f5c55"/><rect width="34" height="34" filter="url(#tg)" opacity=".45"/></svg>
<span class="t" style="top:821px;font-size:15px;letter-spacing:-0.644px;left:502px;">T:200 (SRV)</span>
<div class="a" style="left:456px;top:847px;width:365px;height:1px;background:#cdd0d6;"></div>
<svg class="a" style="left:456px;top:848px;overflow:hidden" width="35" height="34" viewBox="0 0 34 34" preserveAspectRatio="none"><rect width="34" height="34" fill="#686863"/><path d="M0 26 L34 8" stroke="#55554f" stroke-width="4" fill="none"/><path d="M0 12 L20 2" stroke="#5c5c56" stroke-width="3" fill="none"/><rect x="8" y="3" width="14" height="3" fill="#4a4a45"/><rect x="0" y="30" width="34" height="4" fill="#5a5a55"/><rect width="34" height="34" filter="url(#tg)" opacity=".45"/></svg>
<span class="t" style="top:856px;font-size:15px;letter-spacing:-0.644px;left:502px;">T:214 (SRV)</span>
<div class="a" style="left:456px;top:882px;width:365px;height:1px;background:#cdd0d6;"></div>
<svg class="a" style="left:456px;top:883px;overflow:hidden" width="35" height="34" viewBox="0 0 34 34" preserveAspectRatio="none"><rect width="34" height="34" fill="#403f39"/><rect x="0" y="0" width="34" height="5" fill="#5a5950"/><rect x="0" y="7" width="34" height="4" fill="#2c2b27"/><rect x="0" y="13" width="34" height="5" fill="#55544b"/><rect x="0" y="20" width="34" height="3" fill="#2f2e2a"/><rect x="3" y="24" width="6" height="8" fill="#5f5e54"/><rect x="12" y="24" width="6" height="8" fill="#57564d"/><rect x="21" y="24" width="6" height="8" fill="#5f5e54"/><rect x="29" y="0" width="3" height="34" fill="#35342f"/><rect width="34" height="34" filter="url(#tg)" opacity=".45"/></svg>
<span class="t" style="top:891px;font-size:15px;letter-spacing:-0.644px;left:502px;">T:239 (SRV)</span>
<div class="a" style="left:456px;top:917px;width:365px;height:1px;background:#cdd0d6;"></div>
<svg class="a" style="left:456px;top:918px;overflow:hidden" width="35" height="34" viewBox="0 0 34 34" preserveAspectRatio="none"><rect width="34" height="34" fill="#312f2b"/><rect x="2" y="2" width="12" height="5" fill="#66645a"/><rect x="16" y="3" width="5" height="12" fill="#5c5a51"/><rect x="23" y="2" width="9" height="7" fill="#6d6b61"/><rect x="3" y="10" width="9" height="9" fill="#4c4a43"/><rect x="22" y="12" width="10" height="5" fill="#5f5d54"/><rect x="13" y="18" width="8" height="6" fill="#6a685e"/><rect x="2" y="22" width="8" height="10" fill="#58564e"/><rect x="24" y="20" width="8" height="12" fill="#4e4c45"/><rect x="12" y="27" width="10" height="5" fill="#605e55"/><rect width="34" height="34" filter="url(#tg)" opacity=".45"/></svg>
<span class="t" style="top:926px;font-size:15px;letter-spacing:-0.644px;left:502px;">T:273 (SRV)</span>
<div class="a" style="left:456px;top:952px;width:365px;height:1px;background:#cdd0d6;"></div>
<svg class="a" style="left:456px;top:953px;overflow:hidden" width="35" height="34" viewBox="0 0 34 34" preserveAspectRatio="none"><rect width="34" height="34" fill="#191716"/><rect x="0" y="3" width="34" height="4" fill="#8a8273"/><rect x="0" y="0" width="34" height="2" fill="#5d5850"/><rect x="1" y="12" width="20" height="3" fill="#7a7366"/><rect x="1" y="17" width="20" height="3" fill="#8c8374"/><rect x="24" y="8" width="8" height="10" fill="#6b4a3e"/><rect x="1" y="23" width="14" height="3" fill="#6e685c"/><rect x="3" y="28" width="5" height="5" fill="#55504a"/><rect x="11" y="28" width="5" height="5" fill="#7c7568"/><rect x="20" y="24" width="12" height="8" fill="#3b3834"/><rect width="34" height="34" filter="url(#tg)" opacity=".45"/></svg>
<span class="t" style="top:961px;font-size:15px;letter-spacing:-0.644px;left:502px;">T:286 (SRV)</span>
<div class="a" style="left:456px;top:987px;width:365px;height:1px;background:#cdd0d6;"></div>
<svg class="a" style="left:456px;top:988px;overflow:hidden" width="35" height="34" viewBox="0 0 34 34" preserveAspectRatio="none"><rect width="34" height="34" fill="#3a3936"/><rect x="0" y="0" width="34" height="6" fill="#55544f"/><rect x="4" y="8" width="10" height="20" fill="#4a4945"/><rect width="34" height="34" filter="url(#tg)" opacity=".45"/></svg>
<div class="a" style="left:813px;top:731px;width:3px;height:42px;background:#0f6ecd;"></div>
<div class="a" style="left:821px;top:368px;width:3px;height:632px;background:#c8ccd3;"></div>
<!-- image panel -->
<div class="a" style="left:824px;top:333px;width:632px;height:105px;background:#eeeff3;"></div>
<div class="a" style="left:824px;top:367px;width:632px;height:1px;background:#cdd0d6;"></div>
<div class="a" style="left:1271px;top:333px;width:1px;height:34px;background:#cdd0d6;"></div>
<svg class="a" style="left:1279px;top:341px;" width="20" height="19" viewBox="0 0 20 19"><path d="M10 0.5 L19.5 5.5 L10 10.5 L0.5 5.5 Z" fill="#2b3541"/><path d="M2 9 L10 13.2 L18 9 M2 13 L10 17.2 L18 13" fill="none" stroke="#2b3541" stroke-width="1.7"/></svg>
<span class="t" style="top:341px;font-size:15px;letter-spacing:-0.425px;left:1307.5px;">Show Resource Table</span>
<div class="a" style="left:824px;top:402px;width:632px;height:1px;background:#cdd0d6;"></div>
<div class="a" style="left:858px;top:368px;width:1px;height:34px;background:#cdd0d6;"></div>
<div class="a" style="left:893px;top:368px;width:1px;height:34px;background:#cdd0d6;"></div>
<div class="a" style="left:1070px;top:368px;width:1px;height:34px;background:#cdd0d6;"></div>
<div class="a" style="left:1316px;top:368px;width:1px;height:34px;background:#cdd0d6;"></div>
<svg class="a" style="left:831px;top:376px;" width="20" height="18" viewBox="0 0 20 18"><rect x="0.8" y="0.8" width="18.4" height="16.4" fill="none" stroke="#2b3541" stroke-width="1.6"/><rect x="0" y="0" width="20" height="2.6" fill="#2b3541"/><rect x="0" y="15.6" width="20" height="2.4" fill="#2b3541"/><path d="M2.8 14.6 L7.6 8.6 L10.2 11.4 L13.4 7.6 L17.2 11.6 V14.6 Z" fill="#2b3541"/><circle cx="6.6" cy="6.2" r="1.7" fill="#2b3541"/><path d="M12.5 1.3 H18.5" stroke="#eeeff3" stroke-width="0.8" stroke-dasharray="1.4 0.8"/></svg>
<svg class="a" style="left:866px;top:374.8px;" width="20.4" height="20.4" viewBox="0 0 20.4 20.4"><path d="M18.6 6.4 A9.3 9.3 0 1 0 19.5 10.6" fill="none" stroke="#2b3541" stroke-width="1.5"/><path d="M20.2 4.2 L19.4 8.6 L15.2 6.8 Z" fill="#2b3541"/><path d="M10 5.6 V10.9 H13.2" fill="none" stroke="#2b3541" stroke-width="1.5"/></svg>
<span class="t" style="top:375.5px;font-size:15px;letter-spacing:-0.799px;left:1081px;">R8G8B8A8_UNORM</span>
<svg class="a" style="left:1301.5px;top:384px;" width="9.4" height="4.8" viewBox="0 0 9.4 4.8"><path d="M0 0 H9.4 L4.7 4.8 Z" fill="#2b3541"/></svg>
<span class="t" style="top:375.5px;font-size:15px;letter-spacing:-0.406px;right:483px;margin-right:-0.406px;">1024x1024</span>
<div class="a" style="left:858px;top:403px;width:1px;height:35px;background:#cdd0d6;"></div>
<div class="a" style="left:893px;top:403px;width:1px;height:35px;background:#cdd0d6;"></div>
<div class="a" style="left:1351px;top:403px;width:1px;height:35px;background:#cdd0d6;"></div>
<div class="a" style="left:1386px;top:403px;width:1px;height:35px;background:#cdd0d6;"></div>
<div class="a" style="left:1421px;top:403px;width:1px;height:35px;background:#cdd0d6;"></div>
<svg class="a" style="left:831px;top:410px;" width="20" height="20" viewBox="0 0 20 20"><rect x="0.75" y="0.75" width="18.5" height="18.5" fill="#f7f8fa" stroke="#2b3541" stroke-width="1.5"/><rect x="1" y="1" width="9" height="9" fill="#2b3541"/><rect x="10" y="10" width="9" height="9" fill="#2b3541"/></svg>
<svg class="a" style="left:866px;top:414px;" width="20" height="14.5" viewBox="0 0 20 14.5"><path d="M2.6 0 H17.4 L20 3.6 H0 Z" fill="#dcdee3"/><path d="M5.6 6 H14.4 L16.4 9 H3.6 Z" fill="#d0d3d8"/><path d="M10 10.6 L13.2 14 H6.8 Z" fill="#cdd0d5"/></svg>
<svg class="a" style="left:1359px;top:410px;" width="20" height="19" viewBox="0 0 20 19"><path d="M4.8 7.25 H1.25 V17.5 H18.75 V7.25 H15.2" fill="none" stroke="#2b3541" stroke-width="2.5"/><rect x="8.75" y="4" width="2.5" height="11" fill="#2b3541"/><path d="M10 0 L5.2 4.9 H14.8 Z" fill="#2b3541"/></svg>
<svg class="a" style="left:1394.5px;top:411px;" width="19" height="18" viewBox="0 0 19 18"><path d="M0 0 H19 L12.4 6.6 H6.6 Z" fill="#2b3541"/><path d="M0 8.5 H19" stroke="#2b3541" stroke-width="1"/><path d="M7 10.6 H12 L17.6 17.2 H1.4 Z" fill="none" stroke="#2b3541" stroke-width="1.3"/></svg>
<svg class="a" style="left:1429.3px;top:411.2px;" width="20" height="17.5" viewBox="0 0 20 17.5"><path d="M0 17.5 V9.8 H3.2 V7.5 H6 V4.8 H8.6 V7 H10.2 V0 H14.2 V10.7 H16.6 V12.3 H20 V17.5 Z" fill="#2b3541"/></svg>
<svg class="a" style="left:824px;top:438px;overflow:hidden" width="527" height="527" viewBox="824 438 527 527"><defs>
<filter id="grain" x="0" y="0" width="100%" height="100%"><feTurbulence type="fractalNoise" baseFrequency="0.8" numOctaves="2" seed="7"/><feColorMatrix type="matrix" values="0 0 0 0 0  0 0 0 0 0  0 0 0 0 0  1.5 0 0 0 -0.5"/></filter>
<filter id="grainl" x="0" y="0" width="100%" height="100%"><feTurbulence type="fractalNoise" baseFrequency="0.7" numOctaves="2" seed="19"/><feColorMatrix type="matrix" values="0 0 0 0 1  0 0 0 0 1  0 0 0 0 0.95  1.5 0 0 0 -0.62"/></filter>
<filter id="blot" x="0" y="0" width="100%" height="100%"><feTurbulence type="fractalNoise" baseFrequency="0.035 0.05" numOctaves="3" seed="11"/><feColorMatrix type="matrix" values="0 0 0 0 0  0 0 0 0 0  0 0 0 0 0  2.2 0 0 0 -1.0"/></filter>
<filter id="lite" x="0" y="0" width="100%" height="100%"><feTurbulence type="fractalNoise" baseFrequency="0.06 0.03" numOctaves="3" seed="23"/><feColorMatrix type="matrix" values="0 0 0 0 1  0 0 0 0 1  0 0 0 0 0.92  2.2 0 0 0 -1.05"/></filter>
<filter id="s2"><feGaussianBlur stdDeviation="2"/></filter>
<filter id="s4"><feGaussianBlur stdDeviation="4"/></filter>
<filter id="s8"><feGaussianBlur stdDeviation="8"/></filter>
</defs>
<rect x="824" y="438" width="527" height="527" fill="#232221"/>
<!-- left stone base -->
<rect x="824" y="438" width="336" height="527" fill="#42413d"/>
<rect x="824" y="438" width="527" height="8" fill="#171716"/>
<rect x="824" y="438" width="90" height="14" fill="#1b1a19"/>
<!-- top ornament bands (right of popup) -->
<rect x="975" y="446" width="186" height="6" fill="#4a4945"/>
<rect x="975" y="452" width="186" height="10" fill="#6f6e67"/>
<rect x="975" y="462" width="186" height="14" fill="#7a7972"/>
<g fill="#2f2e2b"><ellipse cx="978.0" cy="470" rx="1.3" ry="5"/><ellipse cx="986.4" cy="470" rx="1.3" ry="5"/><ellipse cx="994.8" cy="470" rx="1.3" ry="5"/><ellipse cx="1003.2" cy="470" rx="1.3" ry="5"/><ellipse cx="1011.6" cy="470" rx="1.3" ry="5"/><ellipse cx="1020.0" cy="470" rx="1.3" ry="5"/><ellipse cx="1028.4" cy="470" rx="1.3" ry="5"/><ellipse cx="1036.8" cy="470" rx="1.3" ry="5"/><ellipse cx="1045.2" cy="470" rx="1.3" ry="5"/><ellipse cx="1053.6" cy="470" rx="1.3" ry="5"/><ellipse cx="1062.0" cy="470" rx="1.3" ry="5"/><ellipse cx="1070.4" cy="470" rx="1.3" ry="5"/><ellipse cx="1078.8" cy="470" rx="1.3" ry="5"/><ellipse cx="1087.2" cy="470" rx="1.3" ry="5"/><ellipse cx="1095.6" cy="470" rx="1.3" ry="5"/><ellipse cx="1104.0" cy="470" rx="1.3" ry="5"/><ellipse cx="1112.4" cy="470" rx="1.3" ry="5"/><ellipse cx="1120.8" cy="470" rx="1.3" ry="5"/><ellipse cx="1129.2" cy="470" rx="1.3" ry="5"/><ellipse cx="1137.6" cy="470" rx="1.3" ry="5"/><ellipse cx="1146.0" cy="470" rx="1.3" ry="5"/><ellipse cx="1154.4" cy="470" rx="1.3" ry="5"/><ellipse cx="1162.8" cy="470" rx="1.3" ry="5"/></g>
<rect x="975" y="476" width="186" height="6" fill="#3b3a37"/>
<rect x="975" y="482" width="186" height="15" fill="#4f4e4a"/>
<!-- red band -->
<path d="M975 497 H1150 C1158 497 1162 504 1164 512 C1167 530 1160 548 1157 566 C1156 575 1156 580 1155 586 H975 Z" fill="#694235"/>
<rect x="975" y="497" width="80" height="89" fill="#5d3b30"/>
<rect x="979" y="511" width="68" height="58" fill="none" stroke="#7c5444" stroke-width="1.5"/>
<rect x="986" y="519" width="54" height="40" fill="#553830"/>
<ellipse cx="1085" cy="530" rx="22" ry="30" fill="#5e4a42" filter="url(#s4)"/>
<ellipse cx="1125" cy="540" rx="20" ry="32" fill="#7c5344" filter="url(#s4)"/>
<ellipse cx="1147" cy="520" rx="10" ry="22" fill="#7c6e64" filter="url(#s2)"/>
<rect x="975" y="572" width="180" height="6" fill="#4e322b" opacity=".8"/>
<rect x="975" y="586" width="180" height="5" fill="#2a2928"/>
<!-- gray bands -->
<rect x="975" y="591" width="176" height="18" fill="#4a4946"/>
<rect x="975" y="609" width="176" height="10" fill="#62615c"/>
<rect x="975" y="619" width="176" height="14" fill="#3c3b39"/>
<rect x="975" y="633" width="170" height="30" fill="#4d4c49"/>
<rect x="975" y="640" width="60" height="14" fill="#5e5d59" filter="url(#s2)"/>
<rect x="975" y="663" width="175" height="36" fill="#3f3e3b"/>
<rect x="975" y="668" width="130" height="8" fill="#5a5954"/>
<rect x="975" y="684" width="110" height="6" fill="#55544f"/>
<path d="M1100 700 L1125 660 L1150 650 L1152 700 Z" fill="#5b5a55"/>
<!-- lower-left block -->
<rect x="824" y="732" width="336" height="233" fill="#42413e"/>
<rect x="824" y="732" width="13" height="233" fill="#191918"/>
<rect x="837" y="732" width="32" height="233" fill="#6b6a64"/>
<rect x="840" y="838" width="26" height="50" fill="#7b7a73"/>
<g fill="#3a3936"><rect x="841" y="840" width="24" height="2.5"/><rect x="841" y="848" width="24" height="2.5"/><rect x="841" y="856" width="24" height="2.5"/><rect x="841" y="864" width="24" height="2.5"/><rect x="841" y="872" width="24" height="2.5"/><rect x="841" y="880" width="24" height="2.5"/></g>
<rect x="838" y="895" width="30" height="35" fill="#5a5954"/>
<rect x="869" y="732" width="26" height="233" fill="#33322f"/>
<rect x="895" y="732" width="60" height="233" fill="#565550"/>
<rect x="905" y="740" width="10" height="150" fill="#64635d" opacity=".8"/>
<!-- arch region: between outer arch and top -->
<path d="M895 732 H1160 V700 H975 V732 Z" fill="#4c4b47"/>
<path d="M955 732 H1100 V700 L1040 716 L990 745 L955 790 Z" fill="#55544f"/>
<!-- red interior -->
<path d="M955 933 V870 C957 828 970 795 996 767 C1020 742 1055 724 1100 712 L1145 704 V933 Z" fill="#6a493e"/>
<ellipse cx="1040" cy="810" rx="45" ry="55" fill="#765042" filter="url(#s8)"/>
<path d="M955 885 H1145 V933 H955 Z" fill="#57433b" opacity=".8"/>
<rect x="955" y="905" width="190" height="8" fill="#6b5a50" opacity=".7"/>
<!-- arch band -->
<path d="M931 965 V880 C932 826 948 784 977 752 C1003 726 1045 702 1097 689 L1150 678" fill="none" stroke="#595853" stroke-width="9"/>
<path d="M942 965 V880 C943 830 958 790 985 760 C1010 735 1050 712 1100 700 L1150 690" fill="none" stroke="#85837a" stroke-width="13"/>
<path d="M952 940 V878 C954 830 967 796 992 768 C1016 742 1053 721 1101 709 L1150 699" fill="none" stroke="#24201e" stroke-width="6"/>
<!-- pillar -->
<rect x="1115" y="684" width="38" height="90" fill="#5d5c58"/>
<rect x="1122" y="700" width="10" height="70" fill="#6f6e69"/>
<!-- shrine -->
<rect x="1060" y="774" width="90" height="9" fill="#83817a"/>
<rect x="1078" y="783" width="70" height="10" fill="#5f5e58"/>
<rect x="1092" y="793" width="52" height="62" fill="#77756e"/>
<path d="M1104 846 V818 Q1114 796 1124 818 V846 Z" fill="#8c8a82"/>
<path d="M1110 846 V822 Q1114 810 1118 822 V846 Z" fill="#55534e"/>
<rect x="1086" y="858" width="58" height="9" fill="#7d7b74"/>
<rect x="1086" y="867" width="58" height="12" fill="#4b4541"/>
<rect x="1085" y="879" width="58" height="52" fill="#5d4239"/>
<!-- bottom -->
<rect x="895" y="934" width="250" height="10" fill="#5b5a55"/>
<rect x="895" y="944" width="250" height="10" fill="#3b3a37"/>
<rect x="837" y="954" width="308" height="11" fill="#605f5a"/>
<rect x="940" y="960" width="205" height="5" fill="#3b3a37"/>
<!-- dark gap -->
<path d="M1160 438 H1177 V965 H1143 V740 C1143 720 1153 705 1152 690 C1150 660 1147 640 1152 610 C1155 590 1157 575 1160 560 C1166 540 1168 515 1163 500 C1160 480 1160 460 1160 438 Z" fill="#1a1918"/>
<!-- right light panel -->
<rect x="1176" y="440" width="166" height="263" fill="#9a978b"/>
<rect x="1176" y="440" width="166" height="263" fill="none" stroke="#5f5d56" stroke-width="2"/>
<ellipse cx="1260" cy="610" rx="70" ry="50" fill="#a8a599" filter="url(#s8)"/>
<ellipse cx="1225" cy="500" rx="30" ry="16" fill="#aaa79b" filter="url(#s4)"/>
<rect x="1200" y="469" width="138" height="22" fill="#605e56"/>
<rect x="1182" y="466" width="20" height="30" fill="#727067" filter="url(#s2)"/>
<g fill="#9a978b"><rect x="1204" y="473" width="4" height="14"/><rect x="1213" y="473" width="4" height="14"/><rect x="1222" y="473" width="4" height="14"/><rect x="1231" y="473" width="4" height="14"/><rect x="1240" y="473" width="4" height="14"/><rect x="1249" y="473" width="4" height="14"/><rect x="1258" y="473" width="4" height="14"/><rect x="1267" y="473" width="4" height="14"/><rect x="1276" y="473" width="4" height="14"/><rect x="1285" y="473" width="4" height="14"/><rect x="1294" y="473" width="4" height="14"/><rect x="1303" y="473" width="4" height="14"/><rect x="1312" y="473" width="4" height="14"/><rect x="1321" y="473" width="4" height="14"/><rect x="1330" y="473" width="4" height="14"/></g>
<rect x="1180" y="534" width="160" height="4" fill="#5f5d55"/>
<rect x="1180" y="541" width="160" height="3" fill="#6a685f"/>
<rect x="1180" y="547" width="160" height="4" fill="#5f5d55"/>
<rect x="1180" y="556" width="40" height="26" fill="#77756b" filter="url(#s2)"/>
<ellipse cx="1290" cy="580" rx="14" ry="16" fill="#605e56" filter="url(#s2)"/>
<path d="M1295 595 Q1310 615 1308 640" fill="none" stroke="#6b695f" stroke-width="3"/>
<rect x="1180" y="664" width="130" height="2" fill="#6b695f"/><rect x="1180" y="670" width="130" height="2" fill="#6b695f"/><rect x="1180" y="676" width="130" height="2" fill="#6b695f"/>
<path d="M1340 655 V685 H1310 Z" fill="#4d4b45"/>
<ellipse cx="1275" cy="505" rx="22" ry="10" fill="#767058" filter="url(#s4)" opacity=".8"/>
<rect x="1342" y="438" width="9" height="527" fill="#1a1918"/>
<!-- strips -->
<rect x="1160" y="703" width="191" height="262" fill="#121211"/>
<rect x="1162" y="706" width="56" height="259" fill="#838176"/>
<rect x="1200" y="706" width="2" height="259" fill="#4c4b45"/>
<rect x="1164" y="820" width="36" height="30" fill="#5e5c53" filter="url(#s4)"/>
<rect x="1245" y="707" width="33" height="258" fill="#858378"/>
<rect x="1245" y="907" width="50" height="58" fill="#7d7f79"/>
<rect x="1250" y="915" width="40" height="30" fill="#6e7c80" filter="url(#s4)" opacity=".8"/>
<rect x="1304" y="709" width="34" height="256" fill="#838177"/>
<rect x="1306" y="712" width="30" height="250" fill="none" stroke="#5b5a52" stroke-width="1.5"/>
<rect x="1308" y="770" width="26" height="50" fill="#76858a" filter="url(#s4)" opacity=".6"/>
<!-- overlays -->
<rect x="824" y="438" width="336" height="527" filter="url(#blot)" opacity=".5"/>
<rect x="1160" y="438" width="191" height="527" filter="url(#blot)" opacity=".22"/>
<rect x="824" y="438" width="527" height="527" filter="url(#lite)" opacity=".05"/>
<rect x="824" y="438" width="527" height="527" filter="url(#grain)" opacity=".5"/>
<rect x="824" y="438" width="527" height="527" filter="url(#grainl)" opacity=".07"/>
</svg>
<div class="a" style="left:1351px;top:438px;width:105px;height:527px;background:#f7f8fa;"></div>
<div class="a" style="left:1351px;top:438px;width:105px;height:35px;background:#dfe9f8;"></div>
<span class="t" style="top:446px;font-size:15px;letter-spacing:-0.406px;right:473.5px;margin-right:-0.406px;">1024x1024</span>
<span class="t" style="top:481px;font-size:15px;letter-spacing:-0.427px;right:473.5px;margin-right:-0.427px;">512x512</span>
<span class="t" style="top:516px;font-size:15px;letter-spacing:-0.427px;right:473.5px;margin-right:-0.427px;">256x256</span>
<span class="t" style="top:551px;font-size:15px;letter-spacing:-0.427px;right:473.5px;margin-right:-0.427px;">128x128</span>
<span class="t" style="top:586px;font-size:15px;letter-spacing:-0.344px;right:473.5px;margin-right:-0.344px;">64x64</span>
<span class="t" style="top:621px;font-size:15px;letter-spacing:-0.344px;right:473.5px;margin-right:-0.344px;">32x32</span>
<span class="t" style="top:656px;font-size:15px;letter-spacing:-0.344px;right:473.5px;margin-right:-0.344px;">16x16</span>
<span class="t" style="top:691px;font-size:15px;letter-spacing:-0.344px;right:473.5px;margin-right:-0.344px;">8x8</span>
<span class="t" style="top:726px;font-size:15px;letter-spacing:-0.344px;right:473.5px;margin-right:-0.344px;">4x4</span>
<span class="t" style="top:761px;font-size:15px;letter-spacing:-0.344px;right:473.5px;margin-right:-0.344px;">2x2</span>
<span class="t" style="top:796px;font-size:15px;letter-spacing:-0.344px;right:473.5px;margin-right:-0.344px;">1x1</span>
<div class="a" style="left:824px;top:965px;width:632px;height:35px;background:#eeeff3;border-top:1px solid #cdd0d6;"></div>
<span class="t" style="top:974px;font-size:15px;letter-spacing:-1.400px;left:834.5px;">X:</span>
<span class="t" style="top:974px;font-size:15px;letter-spacing:0.484px;left:850px;">279</span>
<span class="t" style="top:974px;font-size:15px;letter-spacing:-0.859px;left:884px;">Y:</span>
<span class="t" style="top:974px;font-size:15px;letter-spacing:-1.266px;left:900px;">621</span>
<div class="a" style="left:935px;top:966px;width:5px;height:34px;background:#939185;"></div>
<span class="t" style="top:974px;font-size:15px;letter-spacing:-0.741px;left:951px;">R: 147</span>
<span class="t" style="top:974px;font-size:15px;letter-spacing:-0.806px;left:1056px;">G: 145</span>
<span class="t" style="top:974px;font-size:15px;letter-spacing:-0.675px;left:1161px;">B: 133</span>
<span class="t" style="top:974px;font-size:15px;letter-spacing:-0.375px;left:1266px;">A: 255</span>
<span class="t" style="top:974px;font-size:15px;letter-spacing:-1.016px;right:483px;margin-right:-1.016px;">51%</span>
<div class="a" style="left:1456px;top:333px;width:3px;height:667px;background:#c8ccd3;"></div>
<!-- popup -->
<div class="a" style="left:774px;top:450.5px;width:201px;height:281px;background:#f7f8fa;box-shadow:0 2px 9px rgba(0,0,0,.38),0 0 2px rgba(0,0,0,.2)"></div>
<div class="a" style="left:774px;top:485px;width:201px;height:1px;background:#cdd0d6;"></div>
<div class="a" style="left:774px;top:696px;width:201px;height:35.5px;background:#dfe9f8;"></div>
<div class="a" style="left:782px;top:459px;width:20px;height:20px;border:1.5px solid #2b3541"></div>
<div class="a" style="left:784px;top:468px;width:16px;height:2px;background:#0f6ecd;"></div>
<span class="t" style="top:459.5px;font-size:15px;letter-spacing:-0.336px;left:809px;">All</span>
<div class="a" style="left:782px;top:494px;width:20px;height:20px;border:1.5px solid #2b3541"></div>
<span class="t" style="top:494.5px;font-size:15px;letter-spacing:0.057px;left:809px;">Arguments</span>
<div class="a" style="left:782px;top:529px;width:20px;height:20px;border:1.5px solid #2b3541"></div>
<span class="t" style="top:529.5px;font-size:15px;letter-spacing:0.250px;left:809px;">Buffer</span>
<div class="a" style="left:782px;top:564px;width:20px;height:20px;border:1.5px solid #2b3541"></div>
<span class="t" style="top:564.5px;font-size:15px;letter-spacing:0.020px;left:809px;">Geometry</span>
<div class="a" style="left:782px;top:599px;width:20px;height:20px;border:1.5px solid #2b3541"></div>
<span class="t" style="top:599.5px;font-size:15px;letter-spacing:0.023px;left:809px;">Sampler</span>
<div class="a" style="left:782px;top:634px;width:20px;height:20px;border:1.5px solid #2b3541"></div>
<span class="t" style="top:634.5px;font-size:15px;letter-spacing:-0.283px;left:809px;">Shader set</span>
<div class="a" style="left:782px;top:669px;width:20px;height:20px;border:1.5px solid #2b3541"></div>
<span class="t" style="top:669.5px;font-size:15px;letter-spacing:-0.508px;left:809px;">State</span>
<div class="a" style="left:782px;top:704px;width:20px;height:20px;border:1.5px solid #2b3541"></div>
<svg class="a" style="left:785px;top:708px;" width="14" height="12" viewBox="0 0 14 12"><path d="M1 6.5 L5 10.5 L13 1.5" fill="none" stroke="#0f6ecd" stroke-width="2.5"/></svg>
<span class="t" style="top:704.5px;font-size:15px;letter-spacing:-0.367px;left:809px;">Texture</span>
<div class="a" style="left:724.8px;top:368.1px;width:61.4px;height:61.4px;border-radius:50%;background:#ffc000;border:2px solid #c7960d"></div>
<span class="t" style="top:387.2px;font-size:35.7px;font-weight:700;color:#000;left:555.9px;width:400px;text-align:center;transform:scaleX(0.86);-webkit-text-stroke:0.6px #000;">B</span>
<div class="a" style="left:590.3px;top:552.8px;width:61.4px;height:61.4px;border-radius:50%;background:#ffc000;border:2px solid #c7960d"></div>
<span class="t" style="top:571.9px;font-size:35.7px;font-weight:700;color:#000;left:422.1px;width:400px;text-align:center;transform:scaleX(0.88);-webkit-text-stroke:0.6px #000;">C</span>
<!-- right panel -->
<div class="a" style="left:1459px;top:333px;width:460px;height:130px;background:#eeeff3;"></div>
<div class="a" style="left:1479px;top:350px;width:364px;height:35px;background:#f7f8fa;"></div>
<span class="t" style="top:358px;font-size:15px;color:#a9b1bd;letter-spacing:-0.059px;left:1489px;">Type filter expression</span>
<svg class="a" style="left:1816px;top:358px;" width="19" height="20" viewBox="0 0 19 20"><circle cx="7.8" cy="7.8" r="6.8" fill="none" stroke="#b4bac4" stroke-width="1.5"/><path d="M12.8 12.8 L18 18.6" stroke="#b4bac4" stroke-width="2.2"/></svg>
<div class="a" style="left:1864px;top:350px;width:35px;height:35px;background:#f7f8fa;border-bottom:1px solid #d2d5da;"></div>
<svg class="a" style="left:1872px;top:358px;" width="20" height="19" viewBox="0 0 20 19"><path d="M4.8 7.25 H1.25 V17.5 H18.75 V7.25 H15.2" fill="none" stroke="#2b3541" stroke-width="2.5"/><rect x="8.75" y="4" width="2.5" height="11" fill="#2b3541"/><path d="M10 0 L5.2 4.9 H14.8 Z" fill="#2b3541"/></svg>
<div class="a" style="left:1459px;top:402px;width:460px;height:1px;background:#cdd0d6;"></div>
<div class="a" style="left:1459px;top:403px;width:153px;height:60px;background:#f7f8fa;"></div>
<div class="a" style="left:1459px;top:403px;width:153px;height:3px;background:#0f6ecd;"></div>
<div class="a" style="left:1612px;top:462px;width:307px;height:1px;background:#cdd0d6;"></div>
<div class="a" style="left:1459px;top:462px;width:153px;height:1px;background:#e3e5e9;"></div>
<span class="t" style="top:424.5px;font-size:15px;-webkit-text-stroke:0.55px currentColor;letter-spacing:0.095px;left:1335.5px;width:400px;text-align:center;margin-left:0.048px;">Bottlenecks</span>
<span class="t" style="top:414.4px;font-size:15px;letter-spacing:0.109px;left:1489px;width:400px;text-align:center;margin-left:0.055px;">Metrics</span>
<span class="t" style="top:432.4px;font-size:15px;letter-spacing:-0.070px;left:1489px;width:400px;text-align:center;margin-left:-0.035px;">(Selection)</span>
<span class="t" style="top:414.4px;font-size:15px;letter-spacing:0.109px;left:1642.5px;width:400px;text-align:center;margin-left:0.055px;">Metrics</span>
<span class="t" style="top:432.4px;font-size:15px;letter-spacing:-0.388px;left:1642.5px;width:400px;text-align:center;margin-left:-0.194px;">(Frame)</span>
<div class="a" style="left:1459px;top:463px;width:460px;height:467px;background:#f7f8fa;"></div>
<div class="a" style="left:1459px;top:498px;width:460px;height:1px;background:#cdd0d6;"></div>
<svg class="a" style="left:1470px;top:473px;" width="14" height="16" viewBox="0 0 14 16"><path d="M3.9 1.2 C3.6 4.2 1.3 6 1.3 10 A5.4 5.4 0 0 0 12.1 10 C12.1 7 11.2 5 10.4 3 C9.8 4.6 9 5.6 7.8 6.4 C7 4.2 5.7 2.4 3.9 1.2 Z" fill="none" stroke="#fb4b5b" stroke-width="2.2" stroke-linejoin="round"/></svg>
<span class="t" style="top:471.5px;font-size:15px;letter-spacing:-0.155px;left:1494.5px;">Thread Dispatch: Load Imbalance</span>
<div class="a" style="left:1459px;top:930px;width:460px;height:70px;background:#eeeff3;border-top:1px solid #cdd0d6;"></div>
<div class="a" style="left:1479px;top:948px;width:35px;height:35px;background:#f7f8fa;border-bottom:1px solid #d2d5da;"></div>
<div class="a" style="left:1517px;top:948px;width:35px;height:35px;background:#f7f8fa;border-bottom:1px solid #d2d5da;"></div>
<div class="a" style="left:1555px;top:948px;width:35px;height:35px;background:#f7f8fa;border-bottom:1px solid #d2d5da;"></div>
<div class="a" style="left:1593px;top:948px;width:35px;height:35px;background:#f7f8fa;border-bottom:1px solid #d2d5da;"></div>
<svg class="a" style="left:1487px;top:956px;" width="20" height="20" viewBox="0 0 20 20"><rect x="0.75" y="0.75" width="18.5" height="18.5" fill="#f7f8fa" stroke="#2b3541" stroke-width="1.5"/><rect x="1" y="1" width="9" height="9" fill="#2b3541"/><rect x="10" y="10" width="9" height="9" fill="#2b3541"/></svg>
<span class="t" style="top:957px;font-size:15px;letter-spacing:-1.400px;left:1335.2px;width:400px;text-align:center;margin-left:-0.700px;">PS</span>
<svg class="a" style="left:1526px;top:957px;" width="18" height="18" viewBox="0 0 18 18"><path d="M0.6 0.6 L17.4 17" stroke="#2b3541" stroke-width="1.6"/></svg>
<svg class="a" style="left:1563px;top:956px;" width="20" height="20" viewBox="0 0 20 20"><path d="M1 20 V1 H20" fill="none" stroke="#2b3541" stroke-width="2"/><rect x="4" y="4" width="4.5" height="4.5" fill="#2b3541"/><path d="M19 19 L10 10 M10 16 V10 H16" fill="none" stroke="#2b3541" stroke-width="1.6"/></svg>
<svg class="a" style="left:1601px;top:956px;" width="20" height="20" viewBox="0 0 20 20"><path d="M1 1 L19 19 M19 1 L1 19" stroke="#2b3541" stroke-width="1.7"/></svg>
</body></html>
